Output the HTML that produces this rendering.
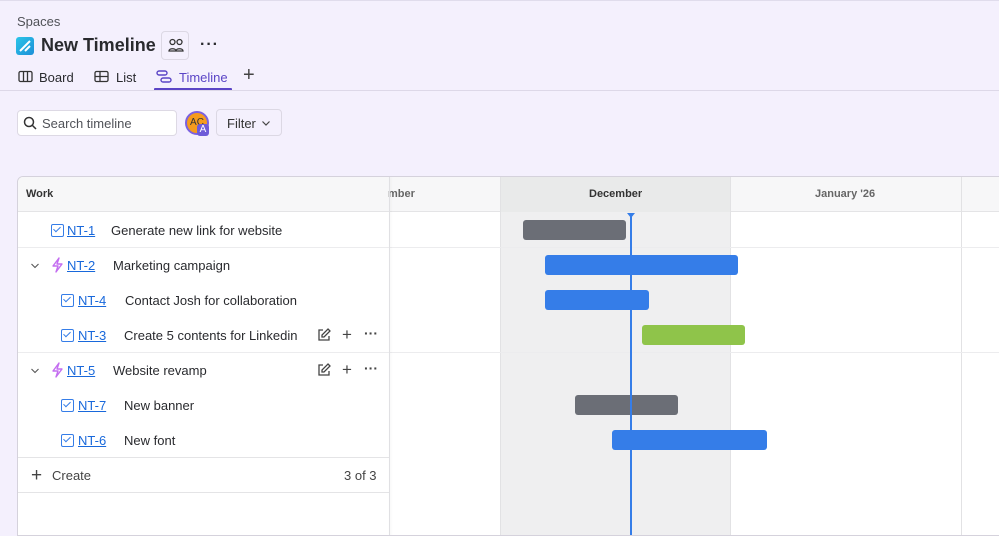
<!DOCTYPE html><html><head><style>
*{box-sizing:border-box;margin:0;padding:0}
body{width:999px;height:528px;overflow:hidden;background:#f4f0fd;font-family:"Liberation Sans",sans-serif;color:#292a2e;position:relative}
.a{position:absolute}
.t{font-size:13px;white-space:nowrap}
.lnk{color:#1868db;text-decoration:underline;font-size:13px}
.cb{position:absolute;width:13px;height:13px;border:1.5px solid #357de8;border-radius:2px}
.cb:after{content:"";position:absolute;left:3px;top:0px;width:3px;height:6px;border:solid #357de8;border-width:0 1.5px 1.5px 0;transform:rotate(45deg)}
.bar{position:absolute;height:20px;border-radius:3px}
</style></head><body>
<div class="a" style="left:0;top:0;width:999px;height:1px;background:#e0dcec"></div>
<div class="a t" style="left:17px;top:14px;color:#505258">Spaces</div>
<div class="a" style="left:16px;top:37px;width:18px;height:18px;border-radius:3px;background:linear-gradient(135deg,#2bc5e8,#1d8fd8)"><svg width="18" height="18"><path d="M4 14 L14 4 M9 14 L14 9" stroke="#fff" stroke-width="2"/></svg></div>
<div class="a" style="left:41px;top:35px;font-size:18px;font-weight:bold">New Timeline</div>
<div class="a" style="left:161px;top:31px;width:28px;height:29px;border:1px solid #dcd8e4;border-radius:4px"><svg width="28" height="28"><circle cx="10.5" cy="10" r="2.5" fill="none" stroke="#333" stroke-width="1.3"/><circle cx="17.5" cy="10" r="2.5" fill="none" stroke="#333" stroke-width="1.3"/><path d="M7 19c0-3 7-3 7 0zM14 19c0-3 7-3 7 0z" fill="none" stroke="#333" stroke-width="1.3"/></svg></div>
<div class="a" style="left:200px;top:36px;font-size:16px;letter-spacing:1px;font-weight:bold">···</div>
<svg class="a" style="left:18px;top:70px" width="15" height="14"><rect x="1" y="1.5" width="13" height="10" rx="1.5" fill="none" stroke="#333" stroke-width="1.3"/><path d="M5.5 2v9M9.5 2v9" stroke="#333" stroke-width="1.3"/></svg>
<div class="a t" style="left:39px;top:70px">Board</div>
<svg class="a" style="left:94px;top:70px" width="15" height="14"><rect x="1" y="1.5" width="13" height="10" rx="1.5" fill="none" stroke="#333" stroke-width="1.3"/><path d="M1 6.5h13M6 2v9" stroke="#333" stroke-width="1.3"/></svg>
<div class="a t" style="left:116px;top:70px">List</div>
<svg class="a" style="left:156px;top:69px" width="17" height="15"><rect x="1" y="2" width="10" height="4" rx="2" fill="none" stroke="#5b45c6" stroke-width="1.4"/><rect x="5" y="9" width="10" height="4" rx="2" fill="none" stroke="#5b45c6" stroke-width="1.4"/></svg>
<div class="a t" style="left:179px;top:70px;color:#5b45c6">Timeline</div>
<div class="a" style="left:154px;top:88px;width:78px;height:3px;background:#5b45c6;border-radius:1px"></div>
<div class="a" style="left:243px;top:64px;font-size:20px;color:#444">+</div>
<div class="a" style="left:0;top:90px;width:999px;height:1px;background:#ddd8e8"></div>
<div class="a" style="left:17px;top:110px;width:160px;height:26px;background:#fff;border:1px solid #ddd9e4;border-radius:4px"></div>
<svg class="a" style="left:23px;top:116px" width="14" height="14"><circle cx="6" cy="6" r="4.5" fill="none" stroke="#333" stroke-width="1.5"/><path d="M9.5 9.5L13 13" stroke="#333" stroke-width="1.5"/></svg>
<div class="a t" style="left:42px;top:116px;color:#505258">Search timeline</div>
<div class="a" style="left:185px;top:111px;width:24px;height:24px;border-radius:50%;background:#f59b1d;border:2px solid #7b61e0;font-size:10px;text-align:center;line-height:20px;color:#333">AC</div>
<div class="a" style="left:197px;top:124px;width:12px;height:12px;border-radius:3px;background:#6e5bd8;color:#fff;font-size:10px;text-align:center;line-height:12px">A</div>
<div class="a" style="left:216px;top:109px;width:66px;height:27px;border:1px solid #dcd8e4;border-radius:4px;background:#f4f0fd"></div>
<div class="a t" style="left:227px;top:116px;color:#333">Filter</div>
<svg class="a" style="left:261px;top:119px" width="10" height="8"><path d="M1.5 2.5L5 6 8.5 2.5" fill="none" stroke="#444" stroke-width="1.2"/></svg>

<div class="a" style="left:17px;top:176px;width:990px;height:360px;background:#fff;border:1px solid #d5d2dc;border-radius:6px 0 0 0;overflow:hidden">
 <div class="a" style="left:0;top:0;width:990px;height:35px;background:#f7f7f8;border-bottom:1px solid #e4e4e6"></div>
 <div class="a" style="left:482px;top:0;width:230px;height:360px;background:#efeff0"></div>
 <div class="a" style="left:482px;top:0;width:230px;height:35px;background:#e9eaea"></div>
 <div class="a" style="left:482px;top:0;width:1px;height:360px;background:#e2e2e4"></div>
 <div class="a" style="left:712px;top:0;width:1px;height:360px;background:#e2e2e4"></div>
 <div class="a" style="left:943px;top:0;width:1px;height:360px;background:#e2e2e4"></div>
 <div class="a" style="left:0;top:70px;width:990px;height:1px;background:#ececee"></div>
 <div class="a" style="left:0;top:175px;width:990px;height:1px;background:#ececee"></div>
 <div class="a" style="left:0;top:280px;width:372px;height:1px;background:#e4e4e6"></div>
 <div class="a" style="left:0;top:315px;width:372px;height:1px;background:#e4e4e6"></div>
 <div class="a" style="font-size:11px;font-weight:bold;left:8px;top:11px;color:#333">Work</div>
 <div class="a" style="font-size:11px;font-weight:bold;left:370px;top:11px;color:#666">mber</div>
 <div class="a" style="font-size:11px;font-weight:bold;left:571px;top:11px;color:#333">December</div>
 <div class="a" style="font-size:11px;font-weight:bold;left:797px;top:11px;color:#666">January '26</div>
 <div class="bar" style="left:505px;top:43px;width:103px;background:#6b6e76"></div>
 <div class="bar" style="left:527px;top:78px;width:193px;background:#357de8"></div>
 <div class="bar" style="left:527px;top:113px;width:104px;background:#357de8"></div>
 <div class="bar" style="left:624px;top:148px;width:103px;background:#8fc44a"></div>
 <div class="bar" style="left:557px;top:218px;width:103px;background:#6b6e76"></div>
 <div class="bar" style="left:594px;top:253px;width:155px;background:#357de8"></div>
 <div class="a" style="left:612px;top:36px;width:2px;height:330px;background:#357de8"></div>
 <div class="a" style="left:609px;top:36px;border:4px solid transparent;border-top:5px solid #357de8"></div>
 <div class="a" style="left:371px;top:0;width:1px;height:360px;background:#e0e0e3;box-shadow:1px 0 2px rgba(0,0,0,.06)"></div>
</div>
<div class="cb" style="left:51px;top:224px"></div><span class="a lnk" style="left:67px;top:223px">NT-1</span><span class="a t" style="left:111px;top:223px">Generate new link for website</span>
<svg class="a" style="left:30px;top:262px" width="10" height="8"><path d="M1.5 2L5 5.5 8.5 2" fill="none" stroke="#555" stroke-width="1.1"/></svg><svg class="a" style="left:50px;top:257px" width="14" height="16"><path d="M9 1L3 9h5l-2 6 6-8H7z" fill="none" stroke="#c46ef0" stroke-width="1.4" stroke-linejoin="round"/></svg><span class="a lnk" style="left:67px;top:258px">NT-2</span><span class="a t" style="left:113px;top:258px">Marketing campaign</span>
<div class="cb" style="left:61px;top:294px"></div><span class="a lnk" style="left:78px;top:293px">NT-4</span><span class="a t" style="left:125px;top:293px">Contact Josh for collaboration</span>
<div class="cb" style="left:61px;top:329px"></div><span class="a lnk" style="left:78px;top:328px">NT-3</span><span class="a t" style="left:124px;top:328px">Create 5 contents for Linkedin</span>
<svg class="a" style="left:30px;top:367px" width="10" height="8"><path d="M1.5 2L5 5.5 8.5 2" fill="none" stroke="#555" stroke-width="1.1"/></svg><svg class="a" style="left:50px;top:362px" width="14" height="16"><path d="M9 1L3 9h5l-2 6 6-8H7z" fill="none" stroke="#c46ef0" stroke-width="1.4" stroke-linejoin="round"/></svg><span class="a lnk" style="left:67px;top:363px">NT-5</span><span class="a t" style="left:113px;top:363px">Website revamp</span>
<div class="cb" style="left:61px;top:399px"></div><span class="a lnk" style="left:78px;top:398px">NT-7</span><span class="a t" style="left:124px;top:398px">New banner</span>
<div class="cb" style="left:61px;top:434px"></div><span class="a lnk" style="left:78px;top:433px">NT-6</span><span class="a t" style="left:124px;top:433px">New font</span>
<svg class="a" style="left:316px;top:327px" width="16" height="16"><path d="M7 3H3v10h10V9" fill="none" stroke="#444" stroke-width="1.3"/><path d="M12 2l2 2-6 6H6V8z" fill="none" stroke="#444" stroke-width="1.3"/></svg>
<span class="a" style="left:342px;top:325px;font-size:17px;color:#444">+</span><span class="a" style="left:364px;top:325px;font-size:14px;font-weight:bold;color:#444">···</span>
<svg class="a" style="left:316px;top:362px" width="16" height="16"><path d="M7 3H3v10h10V9" fill="none" stroke="#444" stroke-width="1.3"/><path d="M12 2l2 2-6 6H6V8z" fill="none" stroke="#444" stroke-width="1.3"/></svg>
<span class="a" style="left:342px;top:360px;font-size:17px;color:#444">+</span><span class="a" style="left:364px;top:360px;font-size:14px;font-weight:bold;color:#444">···</span>
<span class="a" style="left:31px;top:465px;font-size:19px;color:#444">+</span><span class="a t" style="left:52px;top:468px;color:#444">Create</span>
<span class="a t" style="left:344px;top:468px;color:#444">3 of 3</span>
</body></html>
